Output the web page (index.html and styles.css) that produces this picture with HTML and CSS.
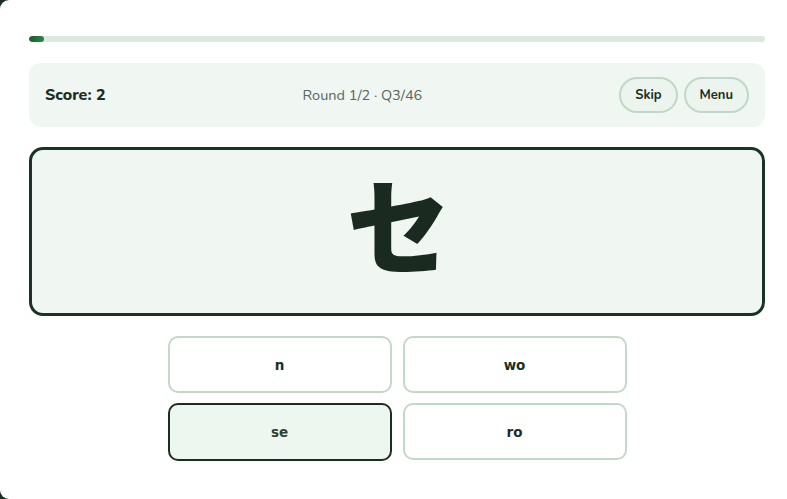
FILE: index.html
```
<!DOCTYPE html>
<html lang="en">
<head>
<meta charset="utf-8">
<title>Kana Quiz</title>
<link rel="stylesheet" href="styles.css">
</head>
<body>
<div class="app">
  <div class="progress"><div class="progress-fill" style="width:2%"></div></div>
  <header class="bar">
    <div class="score">Score: 2</div>
    <div class="round">Round 1/2 · Q3/46</div>
    <div class="actions">
      <button class="pill">Skip</button>
      <button class="pill">Menu</button>
    </div>
  </header>
  <section class="card">
    <div class="kana" lang="ja">セ</div>
  </section>
  <div class="answers">
    <button class="answer">n</button>
    <button class="answer">wo</button>
    <button class="answer selected">se</button>
    <button class="answer">ro</button>
  </div>
</div>
</body>
</html>
```
FILE: styles.css
```
html, body {
  margin: 0;
  padding: 0;
  height: 100%;
  background: #1b2e22;
}
body {
  font-family: "Nunito", "Lato", "Noto Sans", sans-serif;
  color: #1b2e22;
  overflow: hidden;
}
.app {
  box-sizing: border-box;
  height: 100%;
  background: #ffffff;
  border-radius: 9px 0 0 9px;
  padding: 36px 22px 0 29px;
}
.progress {
  height: 6px;
  border-radius: 3px;
  background: #dbe9df;
  overflow: hidden;
}
.progress-fill {
  height: 100%;
  border-radius: 3px;
  background: linear-gradient(90deg, #1d5a32, #2c8447);
}
.bar {
  margin-top: 21px;
  height: 64px;
  box-sizing: border-box;
  background: #f0f6f2;
  border-radius: 12px;
  padding: 0 16px;
  display: flex;
  align-items: center;
  justify-content: space-between;
}
.score {
  font-weight: 800;
  font-size: 16px;
}
.round {
  font-size: 14.5px;
  color: #57675d;
}
.actions {
  display: flex;
  gap: 6px;
}
.pill {
  font-family: inherit;
  font-weight: 700;
  font-size: 13px;
  color: #1b2e22;
  height: 36px;
  padding: 0 14px;
  border: 2px solid #c0d9c6;
  border-radius: 18px;
  background: #ecf4ee;
}
.card {
  margin-top: 20px;
  height: 169px;
  box-sizing: border-box;
  border: 3px solid #1a3424;
  border-radius: 14px;
  background: #f0f6f2;
  display: flex;
  align-items: center;
  justify-content: center;
}
.kana {
  font-family: "Noto Sans CJK JP", sans-serif;
  font-weight: 900;
  font-size: 104px;
  line-height: 1;
  color: #1b2a20;
  margin-top: -20px;
  margin-left: 3px;
}
.answers {
  width: 459px;
  margin: 20px auto 0;
  display: grid;
  grid-template-columns: 224px 224px;
  column-gap: 11px;
  row-gap: 10px;
}
.answer {
  height: 57px;
  border: 2px solid #c2d9c7;
  border-radius: 10px;
  background: #ffffff;
  font-family: "DejaVu Sans", sans-serif;
  font-weight: 700;
  font-size: 13.5px;
  color: #1b2e22;
}
.answer.selected {
  border-color: #1b2e22;
  background: #edf6ef;
  height: 58px;
  color: #2a4334;
}
```
